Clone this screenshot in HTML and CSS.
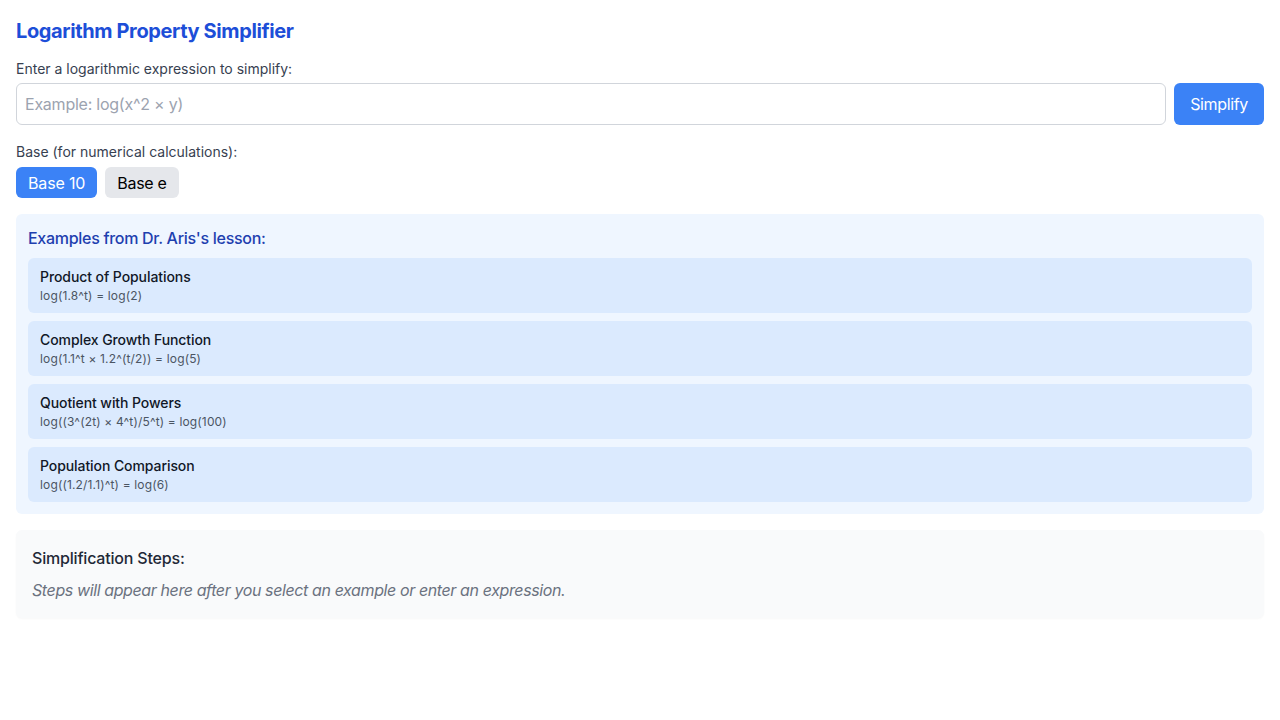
FILE: index.html
```html
<!DOCTYPE html>
<html lang="en">
<head>
<meta charset="utf-8">
<title>Logarithm Property Simplifier</title>
<link rel="stylesheet" href="styles.css">
</head>
<body>
<main class="app">
  <h1 class="title">Logarithm Property Simplifier</h1>

  <label class="field-label" for="expr">Enter a logarithmic expression to simplify:</label>
  <div class="input-row">
    <input id="expr" class="expr-input" type="text" placeholder="Example: log(x^2 × y)">
    <button class="btn-primary" type="button">Simplify</button>
  </div>

  <div class="field-label base-label">Base (for numerical calculations):</div>
  <div class="base-row">
    <button class="base-btn active" type="button">Base 10</button>
    <button class="base-btn" type="button">Base e</button>
  </div>

  <section class="examples">
    <h2 class="examples-title">Examples from Dr. Aris's lesson:</h2>
    <div class="example-list">
      <button class="example" type="button">
        <span class="example-name">Product of Populations</span>
        <span class="example-expr">log(1.8^t) = log(2)</span>
      </button>
      <button class="example" type="button">
        <span class="example-name">Complex Growth Function</span>
        <span class="example-expr">log(1.1^t × 1.2^(t/2)) = log(5)</span>
      </button>
      <button class="example" type="button">
        <span class="example-name">Quotient with Powers</span>
        <span class="example-expr">log((3^(2t) × 4^t)/5^t) = log(100)</span>
      </button>
      <button class="example" type="button">
        <span class="example-name">Population Comparison</span>
        <span class="example-expr">log((1.2/1.1)^t) = log(6)</span>
      </button>
    </div>
  </section>

  <section class="steps">
    <h2 class="steps-title">Simplification Steps:</h2>
    <p class="steps-empty">Steps will appear here after you select an example or enter an expression.</p>
  </section>
</main>
</body>
</html>
```

FILE: styles.css
```css
* {
  box-sizing: border-box;
}

html, body {
  margin: 0;
  background: #ffffff;
}

body {
  font-family: Inter, "Noto Sans", "Liberation Sans", sans-serif;
  color: #111827;
}

.app {
  padding: 17px 16px 16px;
}

.title {
  margin: 0 0 14px;
  font-size: 20px;
  line-height: 28px;
  font-weight: 700;
  letter-spacing: -0.38px;
  color: #1d4ed8;
}

.field-label {
  display: block;
  font-size: 14px;
  line-height: 20px;
  color: #374151;
  margin-bottom: 4px;
}

.base-label {
  margin-bottom: 5px;
}

.input-row {
  display: flex;
  gap: 8px;
  margin-bottom: 17px;
}

.expr-input {
  flex: 1;
  height: 42px;
  padding: 8px;
  font-family: inherit;
  font-size: 16px;
  line-height: 24px;
  color: #111827;
  border: 1px solid #d1d5db;
  border-radius: 6px;
  outline: none;
}

.expr-input::placeholder {
  color: #9ca3af;
  letter-spacing: -0.24px;
}

.btn-primary {
  height: 42px;
  padding: 0 16px;
  font-family: inherit;
  font-size: 16px;
  letter-spacing: -0.35px;
  color: #ffffff;
  background: #3b82f6;
  border: none;
  border-radius: 6px;
}

.base-row {
  display: flex;
  gap: 8px;
  margin-bottom: 16px;
}

.base-btn {
  height: 31px;
  padding: 0 12px;
  font-family: inherit;
  font-size: 16px;
  line-height: 24px;
  letter-spacing: -0.3px;
  color: #000000;
  background: #e5e7eb;
  border: none;
  border-radius: 6px;
}

.base-btn.active {
  color: #ffffff;
  background: #3b82f6;
  letter-spacing: -0.15px;
}

.examples {
  background: #eff6ff;
  border-radius: 6px;
  padding: 12px;
  margin-bottom: 16px;
}

.examples-title {
  margin: 0 0 8px;
  font-size: 16px;
  line-height: 24px;
  font-weight: 500;
  letter-spacing: -0.29px;
  color: #1e40af;
}

.example-list {
  display: flex;
  flex-direction: column;
  gap: 8px;
}

.example {
  display: flex;
  flex-direction: column;
  align-items: flex-start;
  width: 100%;
  height: 55px;
  padding: 9px 12px;
  text-align: left;
  font-family: inherit;
  background: #dbeafe;
  border: none;
  border-radius: 6px;
}

.example-name {
  font-size: 14px;
  line-height: 20px;
  font-weight: 500;
  letter-spacing: -0.08px;
  color: #111827;
}

.example-expr {
  margin-top: 1px;
  font-size: 12px;
  line-height: 16px;
  letter-spacing: 0.15px;
  color: #4b5563;
}

.steps {
  background: #f9fafb;
  border-radius: 6px;
  padding: 16px;
  box-shadow: 0 1px 2px rgba(0, 0, 0, 0.03);
}

.steps-title {
  margin: 0 0 8px;
  font-size: 16px;
  line-height: 24px;
  font-weight: 500;
  letter-spacing: -0.19px;
  color: #1f2937;
}

.steps-empty {
  margin: 0;
  font-size: 16px;
  line-height: 24px;
  font-style: italic;
  letter-spacing: -0.39px;
  color: #6b7280;
}
```
